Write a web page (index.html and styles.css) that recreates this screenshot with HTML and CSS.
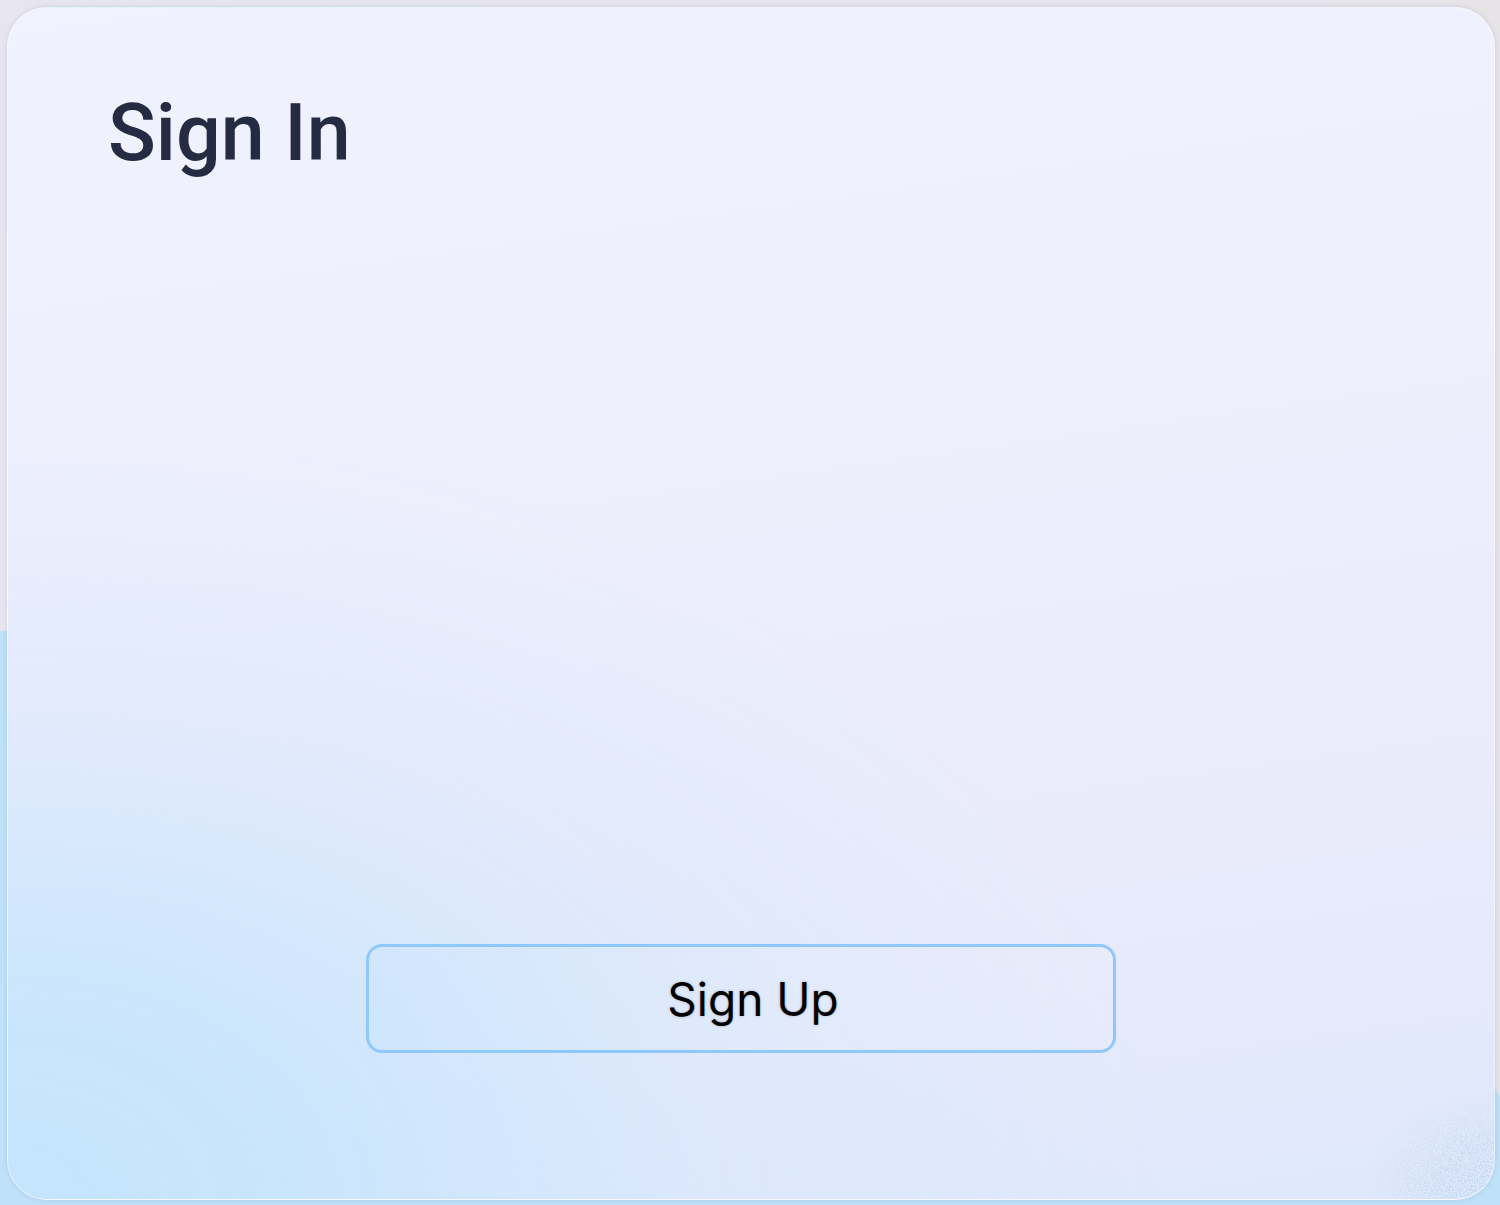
FILE: index.html
```html
<!DOCTYPE html>
<html lang="en">
<head>
<meta charset="utf-8">
<title>Sign In</title>
<link rel="stylesheet" href="styles.css">
</head>
<body>
<div class="stage">
  <div class="blob"></div>
  <main class="card">
    <h1 class="title">Sign In</h1>
    <button class="signup" type="button">Sign Up</button>
    <svg class="grain" width="130" height="110" viewBox="0 0 130 110" aria-hidden="true">
      <defs>
        <filter id="noise" x="0" y="0" width="100%" height="100%">
          <feTurbulence type="fractalNoise" baseFrequency="1.1" numOctaves="2" seed="4" result="t"/>
          <feColorMatrix in="t" type="matrix" values="0 0 0 0 0.55  0 0 0 0 0.70  0 0 0 0 0.86  0 0 0 12 -5.6"/>
        </filter>
        <radialGradient id="fade" cx="1" cy="1" r="1">
          <stop offset="0" stop-color="#fff" stop-opacity="1"/>
          <stop offset="0.5" stop-color="#fff" stop-opacity="0.7"/>
          <stop offset="1" stop-color="#fff" stop-opacity="0"/>
        </radialGradient>
        <mask id="m"><rect width="130" height="110" fill="url(#fade)"/></mask>
      </defs>
      <rect width="130" height="110" filter="url(#noise)" mask="url(#m)"/>
    </svg>
  </main>
</div>
</body>
</html>
```

FILE: styles.css
```css
html, body {
  margin: 0;
  overflow: hidden;
}
body {
  background: #e6e5ef;
  font-family: Roboto, "Liberation Sans", sans-serif;
}
.stage {
  position: relative;
  width: 1500px;
  height: 1205px;
  box-sizing: border-box;
  padding: 7px 5px 5px 7px;
  overflow: hidden;
  background: linear-gradient(90deg, #e7e6f0 0%, #e6e5ee 85%, #e6e4e6 100%);
}
.blob {
  position: absolute;
  left: -1000px;
  top: 610px;
  width: 2600px;
  height: 1580px;
  border-radius: 50%;
  background: #bfe1f9;
}
.card {
  position: relative;
  box-sizing: border-box;
  width: 1488px;
  height: 1193px;
  border-radius: 40px;
  border: 1px solid rgba(255, 255, 255, 0.55);
  box-shadow: 0 0 5px rgba(90, 90, 130, 0.18);
  padding: 86px 0 146px 100px;
  display: flex;
  flex-direction: column;
  align-items: flex-start;
  overflow: hidden;
  background:
    radial-gradient(ellipse 1150px 780px at 0% 100%, rgba(195, 229, 253, 1) 0%, rgba(199, 229, 253, 0.9) 25%, rgba(214, 231, 252, 0.5) 60%, rgba(236, 238, 252, 0) 100%),
    linear-gradient(172deg, #f0f2fe 0%, #eeeffd 40%, #e9ebfb 72%, #dfe8fc 100%);
}
.title {
  margin: 0;
  font-family: Roboto, "Liberation Sans", sans-serif;
  font-weight: 500;
  font-size: 79px;
  line-height: 1;
  color: #252b42;
}
.signup {
  margin-top: auto;
  margin-left: 258px;
  box-sizing: border-box;
  width: 750px;
  height: 109px;
  border: 3px solid #8fc8fb;
  border-radius: 16px;
  background: linear-gradient(100deg, rgba(200, 228, 253, 0.35) 0%, rgba(255, 255, 255, 0.06) 60%);
  padding: 0 0 0 24px;
  font-family: Inter, "Noto Sans", sans-serif;
  font-weight: 400;
  font-size: 46px;
  color: #000;
  text-shadow: 0 0 3px rgba(0, 0, 0, 0.25);
  cursor: pointer;
}
.grain {
  position: absolute;
  right: 0;
  bottom: 0;
}
```
